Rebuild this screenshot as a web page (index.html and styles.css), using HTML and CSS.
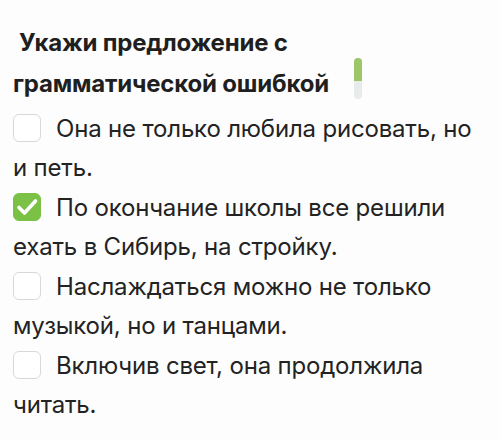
FILE: index.html
```html
<!DOCTYPE html>
<html lang="ru">
<head>
    <meta charset="UTF-8">
    <meta name="viewport" content="width=device-width, initial-scale=1.0">
    <title>Тест</title>
    <link rel="stylesheet" href="styles.css">
</head>
<body>
    <div class="task">
        <h2 class="question">Укажи предложение с грамматической ошибкой<span class="progress"><span class="progress-fill"></span></span></h2>
        <ul class="options">
            <li class="option"><span class="box"></span>Она не только любила рисовать, но и петь.</li>
            <li class="option"><span class="box checked"><svg viewBox="0 0 28 28" width="28" height="28"><path d="M6 14.5l5.5 5.5L22.5 8" fill="none" stroke="#fff" stroke-width="3.6" stroke-linecap="round" stroke-linejoin="round"/></svg></span>По окончание школы все решили ехать в Сибирь, на стройку.</li>
            <li class="option"><span class="box"></span>Наслаждаться можно не только музыкой, но и танцами.</li>
            <li class="option"><span class="box"></span>Включив свет, она продолжила читать.</li>
        </ul>
    </div>
</body>
</html>
```

FILE: styles.css
```css
body {
    margin: 0;
    padding: 22px 13px 0 13px;
    background-color: #fdfdfd;
    font-family: Inter, "Noto Sans", sans-serif;
    color: #232323;
}
.question {
    margin: 0;
    max-width: 380px;
    font-size: 24px;
    font-weight: 700;
    line-height: 41px;
    letter-spacing: -0.2px;
    text-indent: 6px;
    color: #1f1f1f;
}
.progress {
    display: inline-block;
    width: 8px;
    height: 41px;
    margin: -6px 0 0 25px;
    vertical-align: -7px;
    border-radius: 4px;
    background-color: #e7ebea;
    overflow: hidden;
    text-indent: 0;
}
.progress-fill {
    display: block;
    height: 23px;
    background-color: #9cc766;
}
.options {
    list-style: none;
    margin: 5px 0 0 0;
    padding: 0;
    max-width: 475px;
}
.option {
    font-size: 24px;
    line-height: 39px;
    letter-spacing: -0.18px;
    margin-bottom: 1px;
}
.box {
    display: inline-block;
    box-sizing: border-box;
    width: 28px;
    height: 28px;
    margin-right: 15px;
    vertical-align: -5px;
    border: 1.5px solid #d8d8d8;
    border-radius: 6px;
    background-color: #fff;
}
.box svg {
    display: block;
    margin: -1.5px;
}
.box.checked {
    border-color: #7bc146;
    background-color: #7bc146;
}
```
